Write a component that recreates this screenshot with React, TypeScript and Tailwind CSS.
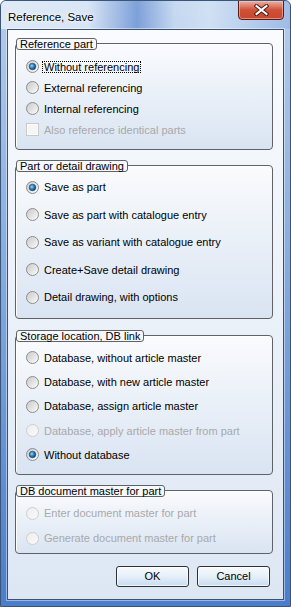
import { useId } from "react";

const font = "font-['Liberation_Sans',Arial,sans-serif]";

function Radio({ checked = false, disabled = false }: { checked?: boolean; disabled?: boolean }) {
  const id = useId().replace(/:/g, "");
  return (
    <svg width="13" height="13" viewBox="0 0 13 13" className="shrink-0">
      <defs>
        <linearGradient id={`${id}o`} x1="0" y1="0" x2="1" y2="1">
          <stop offset="0" stopColor={disabled ? "#ececec" : "#c9c9c9"} />
          <stop offset="1" stopColor={disabled ? "#fbfbfb" : "#ffffff"} />
        </linearGradient>
        <linearGradient id={`${id}i`} x1="0" y1="0" x2="1" y2="1">
          <stop offset="0" stopColor={disabled ? "#efefef" : "#cfcfcf"} />
          <stop offset="1" stopColor={disabled ? "#f8f8f8" : "#f4f4f4"} />
        </linearGradient>
        <radialGradient id={`${id}d`} cx="0.4" cy="0.4" r="0.6">
          <stop offset="0" stopColor="#9fdcfa" />
          <stop offset="0.45" stopColor="#3a8fcb" />
          <stop offset="1" stopColor="#0d3f6e" />
        </radialGradient>
      </defs>
      <circle cx="6.5" cy="6.5" r="6" fill={`url(#${id}o)`} stroke={disabled ? "#cdcdcd" : "#8c8c8c"} />
      <circle cx="6.5" cy="6.5" r="4" fill={`url(#${id}i)`} />
      {checked && <circle cx="6.5" cy="6.5" r="3.3" fill={`url(#${id}d)`} stroke="#1c4a74" strokeWidth="0.6" />}
    </svg>
  );
}

function CheckBox() {
  return (
    <div className="w-[13px] h-[13px] shrink-0 border border-[#c9c9c9] bg-[#f5f5f5] shadow-[inset_0_0_0_1px_#fbfbfb]" />
  );
}

type Item = { text: string; checked?: boolean; disabled?: boolean; focus?: boolean; box?: boolean };

function Row({ item, h }: { item: Item; h: string }) {
  return (
    <div className={`flex items-center pl-[10px] ${h}`}>
      {item.box ? <CheckBox /> : <Radio checked={item.checked} disabled={item.disabled} />}
      <span
        className={`ml-[3px] px-[1px] leading-[10px] h-[12px] flex items-center border ${
          item.focus ? "border-dotted border-black" : "border-transparent"
        } ${item.disabled ? "text-[#a9a9a9]" : "text-black"} whitespace-nowrap`}
      >
        {item.text}
      </span>
    </div>
  );
}

function Group({
  title,
  items,
  rowH,
  mt,
  pt,
  pb,
}: {
  title: string;
  items: Item[];
  rowH: string;
  mt: string;
  pt: string;
  pb: string;
}) {
  return (
    <div
      className={`${mt} ml-[7px] w-[258px] flex flex-col rounded-[4px] border border-[#5f6266] bg-linear-to-b from-[#fafbfd] to-[#d9e4f2] shadow-[inset_1px_1px_0_#ffffff]`}
    >
      <div className="-mt-[6px] self-start h-[12px] px-[3px] leading-[10px] flex items-center rounded-[3px] border border-[#5f6266] bg-[#f6f8fc] text-black whitespace-nowrap">
        {title}
      </div>
      <div className={`flex flex-col ${pt} ${pb}`}>
        {items.map((it) => (
          <Row key={it.text} item={it} h={rowH} />
        ))}
      </div>
    </div>
  );
}

function Button({ label }: { label: string }) {
  return (
    <div className="w-[73px] h-[21px] rounded-[3px] border border-[#2f3133] bg-linear-to-b from-[#f7fafd] via-[#e6eff9] to-[#c6dbf1] shadow-[inset_0_0_0_1px_rgba(255,255,255,0.7)] flex items-center justify-center text-black">
      {label}
    </div>
  );
}

export default function App() {
  return (
    <div
      className={`${font} text-[11px] w-[291px] h-[607px] flex flex-col rounded-t-[6px] border border-[#3b5578] bg-linear-to-b from-[#b4cdec] via-[#7fa6dd] to-[#4a7dcc] overflow-hidden`}
    >
      {/* title bar */}
      <div className="h-[28px] shrink-0 flex items-start bg-[linear-gradient(90deg,rgba(255,255,255,0.6)_0%,rgba(255,255,255,0.5)_30%,rgba(30,80,180,0.35)_47%,rgba(255,255,255,0.25)_60%,rgba(255,255,255,0.4)_72%,rgba(80,130,210,0.2)_100%)]">
        <div className="pl-[7px] pt-[8px] text-[11.5px] text-black [text-shadow:0_0_6px_#fff,0_0_3px_#fff]">
          Reference, Save
        </div>
        <div className="ml-auto mr-[6px] -mt-[1px] w-[46px] h-[20px] rounded-b-[4px] border border-[#5a1d13] bg-linear-to-b from-[#eab1a5] via-[#cf4f37] to-[#c9482f] shadow-[inset_0_0_0_1px_rgba(255,210,200,0.5)] flex items-center justify-center">
          <svg width="15" height="12" viewBox="0 0 15 12">
            <path d="M2.5 2 L12.5 10 M12.5 2 L2.5 10" stroke="#4a1a12" strokeWidth="4" strokeLinecap="square" />
            <path d="M2.5 2 L12.5 10 M12.5 2 L2.5 10" stroke="#ffffff" strokeWidth="2" strokeLinecap="square" />
          </svg>
        </div>
      </div>
      {/* client */}
      <div className="flex-1 px-[6px] pb-[6px] flex">
        <div className="flex-1 flex flex-col border border-[#3c5170] shadow-[0_0_0_1px_rgba(255,255,255,0.45)] bg-linear-to-b from-[#f9fbfe] to-[#dde7f4]">
          <Group
            title="Reference part"
            mt="mt-[13px]"
            pt="pt-[6px]"
            pb="pb-[9px]"
            rowH="h-[21px]"
            items={[
              { text: "Without referencing", checked: true, focus: true },
              { text: "External referencing" },
              { text: "Internal referencing" },
              { text: "Also reference identical parts", disabled: true, box: true },
            ]}
          />
          <Group
            title="Part or detail drawing"
            mt="mt-[15px]"
            pt="pt-[1.5px]"
            pb="pb-[7px]"
            rowH="h-[27.5px]"
            items={[
              { text: "Save as part", checked: true },
              { text: "Save as part with catalogue entry" },
              { text: "Save as variant with catalogue entry" },
              { text: "Create+Save detail drawing" },
              { text: "Detail drawing, with options" },
            ]}
          />
          <Group
            title="Storage location, DB link"
            mt="mt-[16px]"
            pt="pt-[3.75px]"
            pb="pb-[7px]"
            rowH="h-[24.25px]"
            items={[
              { text: "Database, without article master" },
              { text: "Database, with new article master" },
              { text: "Database, assign article master" },
              { text: "Database, apply article master from part", disabled: true },
              { text: "Without database", checked: true },
            ]}
          />
          <Group
            title="DB document master for part"
            mt="mt-[15px]"
            pt="pt-[3.5px]"
            pb="pb-[2.5px]"
            rowH="h-[25px]"
            items={[
              { text: "Enter document master for part", disabled: true },
              { text: "Generate document master for part", disabled: true },
            ]}
          />
          <div className="mt-[12px] ml-[108px] flex gap-[8px]">
            <Button label="OK" />
            <Button label="Cancel" />
          </div>
        </div>
      </div>
    </div>
  );
}
